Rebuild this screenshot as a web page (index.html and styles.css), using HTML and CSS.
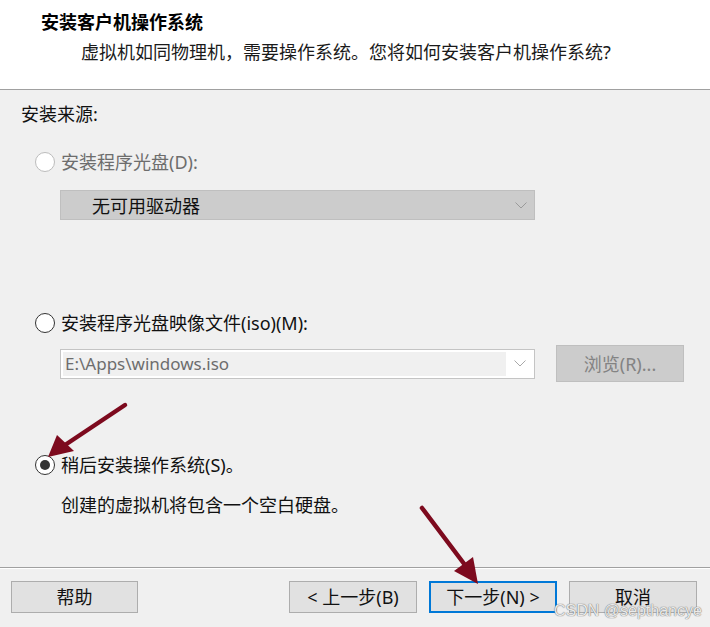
FILE: index.html
```html
<!DOCTYPE html>
<html lang="zh-CN">
<head>
    <meta charset="UTF-8">
    <title>新建虚拟机向导</title>
    <link rel="stylesheet" href="styles.css">
</head>
<body>
<div class="wizard">
    <div class="wizard-header">
        <h1 class="title">安装客户机操作系统</h1>
        <p class="subtitle">虚拟机如同物理机，需要操作系统。您将如何安装客户机操作系统?</p>
    </div>

    <div class="wizard-body">
        <div class="section-label">安装来源:</div>

        <div class="option disabled">
            <span class="radio"></span>
            <span class="option-text">安装程序光盘(D):</span>
        </div>
        <div class="select select-disabled">
            <span class="select-text">无可用驱动器</span>
            <svg class="chevron" viewBox="0 0 12 7"><polyline points="0.5,0.5 6,6 11.5,0.5"></polyline></svg>
        </div>

        <div class="option option-iso">
            <span class="radio"></span>
            <span class="option-text">安装程序光盘映像文件(iso)(M):</span>
        </div>
        <div class="iso-row">
            <div class="combo">
                <span class="combo-field">E:\Apps\windows.iso</span>
                <span class="combo-btn">
                    <svg class="chevron light" viewBox="0 0 12 7"><polyline points="0.5,0.5 6,6 11.5,0.5"></polyline></svg>
                </span>
            </div>
            <div class="btn btn-disabled browse">浏览(R)...</div>
        </div>

        <div class="option option-later">
            <span class="radio checked"></span>
            <span class="option-text">稍后安装操作系统(S)。</span>
        </div>
        <p class="hint">创建的虚拟机将包含一个空白硬盘。</p>
    </div>

    <div class="wizard-footer">
        <div class="btn">帮助</div>
        <div class="footer-right">
            <div class="btn">&lt; 上一步(B)</div>
            <div class="btn btn-default">下一步(N) &gt;</div>
            <div class="btn">取消</div>
        </div>
    </div>

    <!-- annotation arrows drawn over the dialog -->
    <svg class="arrows" viewBox="0 0 710 627">
        <line x1="125" y1="405" x2="62" y2="447"></line>
        <polygon points="48,457 57,435 74,451"></polygon>
        <line x1="422" y1="508" x2="468" y2="569"></line>
        <polygon points="478,584 454,571 473,557"></polygon>
    </svg>
    <div class="watermark">CSDN @septhancye</div>
</div>
</body>
</html>
```

FILE: styles.css
```css
* {
    margin: 0;
    padding: 0;
    box-sizing: border-box;
}

body {
    width: 710px;
    height: 627px;
    overflow: hidden;
    background: #f0f0f0;
    font-family: "Noto Sans", "Noto Sans CJK SC", sans-serif;
    font-size: 18px;
    color: #111;
}

.wizard {
    position: relative;
    width: 710px;
    height: 627px;
    display: flex;
    flex-direction: column;
}

/* Header */
.wizard-header {
    height: 90px;
    background: #fff;
    border-bottom: 1px solid #a0a0a0;
    padding: 10px 0 0 41px;
}

.title {
    font-size: 18px;
    font-weight: bold;
    line-height: 24px;
    color: #000;
}

.subtitle {
    margin: 6px 0 0 40px;
    line-height: 24px;
    color: #1a1a1a;
}

/* Body */
.wizard-body {
    flex: 1;
    padding: 12px 0 0 21px;
    border-bottom: 1px solid #a0a0a0;
}

.section-label {
    line-height: 24px;
}

.option {
    display: flex;
    align-items: center;
    height: 24px;
    margin: 24px 0 0 14px;
}

.option-iso {
    margin-top: 91px;
}

.option-later {
    margin-top: 71px;
}

.option.disabled {
    color: #6d6d6d;
}

.radio {
    width: 20px;
    height: 20px;
    border-radius: 50%;
    border: 1px solid #333;
    background: #fff;
    display: flex;
    align-items: center;
    justify-content: center;
    margin-right: 6px;
}

.disabled .radio {
    border-color: #bcbcbc;
}

.radio.checked::after {
    content: "";
    width: 10px;
    height: 10px;
    border-radius: 50%;
    background: #333;
}

.option-text {
    line-height: 24px;
}

.select {
    width: 475px;
    height: 30px;
    margin: 16px 0 0 39px;
    display: flex;
    align-items: center;
    justify-content: space-between;
    padding: 0 7px 0 31px;
}

.select-disabled {
    background: #cccccc;
    border: 1px solid #bfbfbf;
}

.chevron {
    width: 12px;
    height: 7px;
    fill: none;
    stroke: #9a9a9a;
    stroke-width: 1;
}

.chevron.light {
    stroke: #a8a8a8;
}

.iso-row {
    display: flex;
    align-items: center;
    height: 37px;
    margin: 10px 0 0 39px;
    gap: 21px;
}

.combo {
    width: 475px;
    height: 30px;
    border: 1px solid #c4c4c4;
    background: #fff;
    display: flex;
    padding: 2px 0 2px 2px;
}

.combo-field {
    width: 443px;
    background: #f0f0f0;
    color: #6d6d6d;
    font-size: 17px;
    line-height: 24px;
    padding-left: 2px;
}

.combo-btn {
    flex: 1;
    display: flex;
    align-items: center;
    justify-content: center;
}

.hint {
    margin: 16px 0 0 40px;
    line-height: 24px;
}

/* Buttons */
.btn {
    width: 127px;
    height: 32px;
    background: #e1e1e1;
    border: 1px solid #adadad;
    display: flex;
    align-items: center;
    justify-content: center;
    line-height: 24px;
    color: #111;
}

.btn-default {
    border: 2px solid #0078d7;
}

.btn-disabled {
    background: #cccccc;
    border-color: #bfbfbf;
    color: #838383;
}

.browse {
    width: 128px;
    height: 37px;
}

/* Footer */
.wizard-footer {
    height: 59px;
    border-top: 1px solid #fff;
    display: flex;
    justify-content: space-between;
    padding: 12px 13px 0 11px;
}

.footer-right {
    display: flex;
    gap: 12px;
}

.footer-right .btn {
    width: 128px;
}

/* Overlays */
.arrows {
    position: absolute;
    left: 0;
    top: 0;
    width: 710px;
    height: 627px;
    pointer-events: none;
}

.arrows line {
    stroke: #7d0a1e;
    stroke-width: 4.5;
    stroke-linecap: round;
}

.arrows polygon {
    fill: #7d0a1e;
}

.watermark {
    position: absolute;
    left: 554px;
    top: 602px;
    font-family: "Liberation Sans", sans-serif;
    font-size: 16px;
    line-height: 18px;
    color: rgba(255, 255, 255, 0.85);
    text-shadow: 0 0 1px #777, 0 0 1px #777;
}
```
